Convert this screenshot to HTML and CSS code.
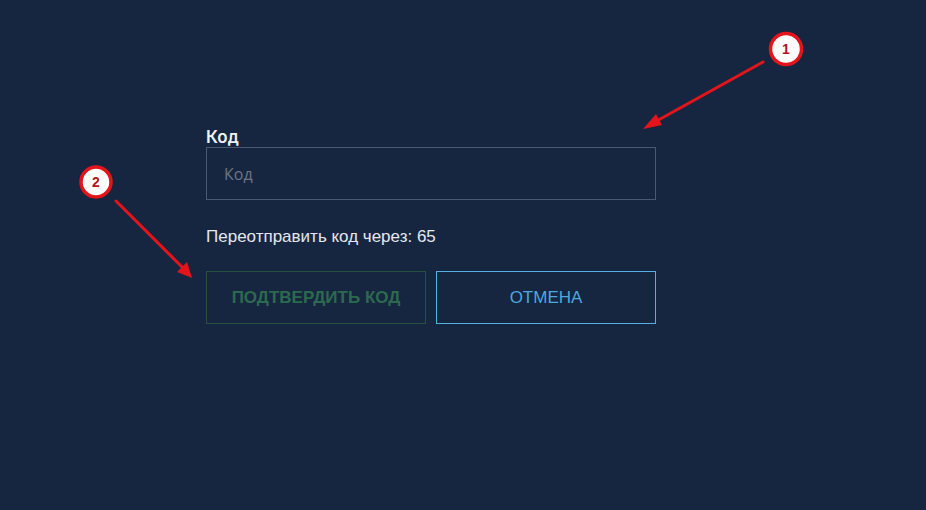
FILE: index.html
```html
<!DOCTYPE html>
<html lang="ru">
<head>
<meta charset="utf-8">
<title>Код</title>
<link rel="stylesheet" href="styles.css">
</head>
<body>
<main class="page">
  <form class="form">
    <label class="label" for="code">Код</label>
    <input class="input" id="code" type="text" placeholder="Код">
    <p class="resend">Переотправить код через: 65</p>
    <div class="actions">
      <button type="button" class="btn btn-confirm">ПОДТВЕРДИТЬ КОД</button>
      <button type="button" class="btn btn-cancel">ОТМЕНА</button>
    </div>
  </form>
</main>
<svg class="annotations" width="926" height="510" viewBox="0 0 926 510">
  <g stroke="#e3141a" stroke-width="3" stroke-linecap="round" fill="none">
    <line x1="763" y1="62" x2="653" y2="123"/>
    <line x1="116" y1="201" x2="183" y2="268"/>
  </g>
  <path d="M643,129 L656,114 L662,125 Z" fill="#e3141a"/>
  <path d="M192,278 L177,272 L187,262 Z" fill="#e3141a"/>
  <g class="badge">
    <circle cx="786" cy="49" r="15.5" fill="#fff" stroke="#e3141a" stroke-width="3.5"/>
    <text x="786" y="54" text-anchor="middle">1</text>
  </g>
  <g class="badge">
    <circle cx="96" cy="182" r="15" fill="#fff" stroke="#e3141a" stroke-width="3.5"/>
    <text x="96" y="187" text-anchor="middle">2</text>
  </g>
</svg>
</body>
</html>
```
FILE: styles.css
```css
html, body {
  margin: 0;
  padding: 0;
  background: #172640;
  width: 926px;
  height: 510px;
  overflow: hidden;
}
.page {
  padding: 127px 0 0 206px;
}
.form {
  width: 450px;
  display: flex;
  flex-direction: column;
}
.label {
  font-family: Inter, "Open Sans", sans-serif;
  font-weight: 600;
  font-size: 17px;
  line-height: 20px;
  color: #eef1f5;
}
.input {
  box-sizing: border-box;
  height: 53px;
  margin: 0;
  padding: 0 17px;
  background: transparent;
  border: 1px solid #4a5870;
  font-family: "Open Sans", sans-serif;
  font-size: 16px;
  color: #cfd5de;
  outline: none;
}
.input::placeholder {
  color: #6c7685;
}
.resend {
  margin: 27px 0 0;
  font-family: "Liberation Sans", Arial, sans-serif;
  font-size: 17px;
  line-height: 19px;
  color: #e4e8ee;
}
.actions {
  display: flex;
  gap: 10px;
  margin-top: 25px;
}
.btn {
  box-sizing: border-box;
  width: 220px;
  height: 53px;
  background: transparent;
  font-family: "Liberation Sans", Arial, sans-serif;
  font-size: 17px;
  padding: 0;
  cursor: pointer;
}
.btn-confirm {
  border: 1px solid #27513f;
  color: #2c6a4e;
  font-weight: 700;
}
.btn-cancel {
  border: 1px solid #58aee0;
  color: #4ba8e0;
}
.annotations {
  position: absolute;
  left: 0;
  top: 0;
  pointer-events: none;
}
.badge text {
  font-family: "Liberation Sans", Arial, sans-serif;
  font-weight: 700;
  font-size: 14px;
  fill: #b0141a;
}
```
